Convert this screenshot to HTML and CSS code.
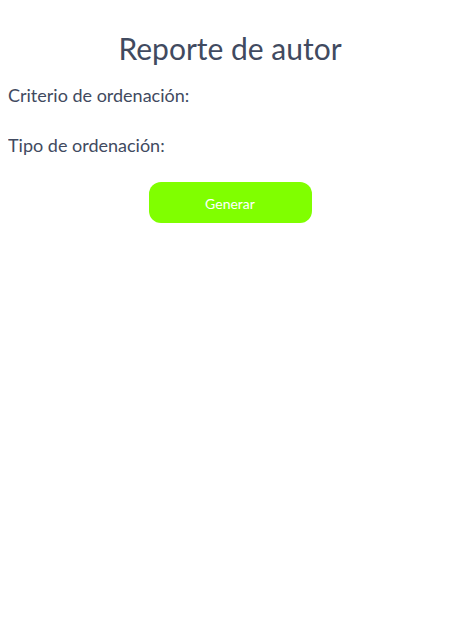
FILE: index.html
```html
<!DOCTYPE html>
<html lang="es">
<head>
<meta charset="utf-8">
<link rel="stylesheet" href="styles.css">
</head>
<body>
<h1 class="title">Reporte de autor</h1>
<div class="field"><label class="label">Criterio de ordenación:</label></div>
<div class="field"><label class="label">Tipo de ordenación:</label></div>
<div class="actions"><button class="btn">Generar</button></div>
</body>
</html>
```
FILE: styles.css
```css
body {
  margin: 8px;
  font-family: Lato, "Open Sans", sans-serif;
  color: #414a60;
  background: #fff;
}
.title {
  font-size: 30px;
  font-weight: 400;
  text-align: center;
  margin: 22px 0 18px;
  line-height: 36px;
}
.field {
  font-size: 18px;
  line-height: 22px;
  margin-bottom: 28px;
}
.actions {
  display: flex;
  justify-content: center;
  margin-top: -2px;
}
.btn {
  width: 163px;
  height: 41px;
  border: none;
  border-radius: 12px;
  background: #80ff00;
  color: #fff;
  font-family: Lato, sans-serif;
  font-size: 14px;
  padding: 2px 0 0;
}
```
